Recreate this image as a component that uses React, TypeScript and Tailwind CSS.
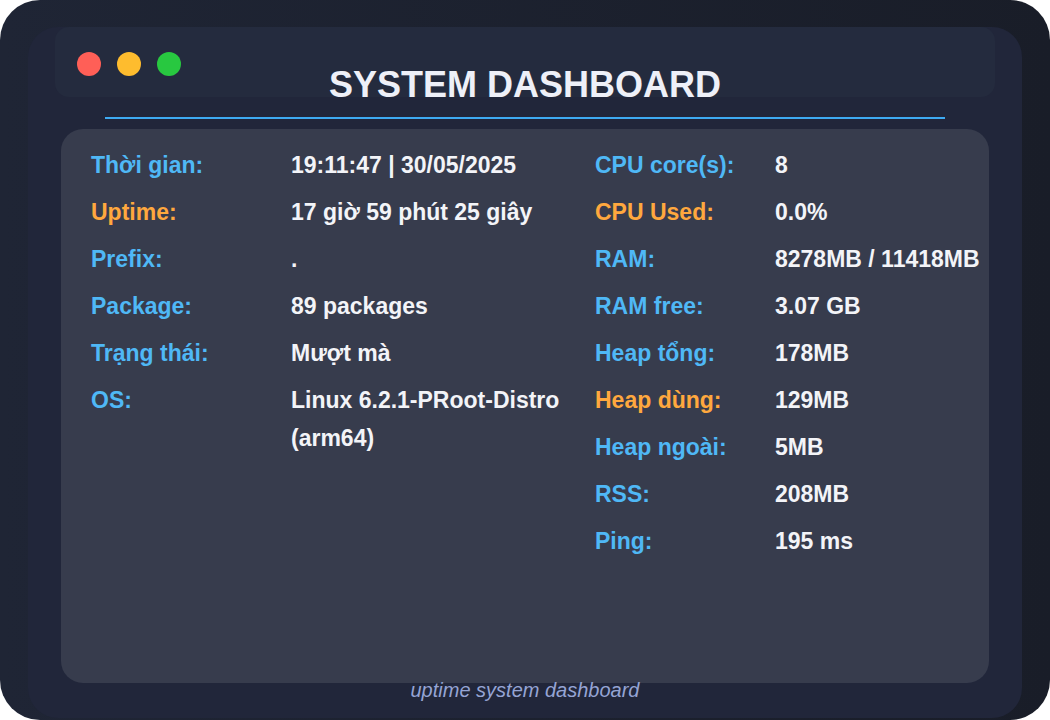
import React from "react";

type Row = { label: string; value: string; accent?: boolean };

const leftRows: Row[] = [
  { label: "Thời gian:", value: "19:11:47 | 30/05/2025" },
  { label: "Uptime:", value: "17 giờ 59 phút 25 giây", accent: true },
  { label: "Prefix:", value: "." },
  { label: "Package:", value: "89 packages" },
  { label: "Trạng thái:", value: "Mượt mà" },
  { label: "OS:", value: "Linux 6.2.1-PRoot-Distro (arm64)" },
];

const rightRows: Row[] = [
  { label: "CPU core(s):", value: "8" },
  { label: "CPU Used:", value: "0.0%", accent: true },
  { label: "RAM:", value: "8278MB / 11418MB" },
  { label: "RAM free:", value: "3.07 GB" },
  { label: "Heap tổng:", value: "178MB" },
  { label: "Heap dùng:", value: "129MB", accent: true },
  { label: "Heap ngoài:", value: "5MB" },
  { label: "RSS:", value: "208MB" },
  { label: "Ping:", value: "195 ms" },
];

function InfoRow({ row, labelWidth, valueWidth }: { row: Row; labelWidth: string; valueWidth: string }) {
  return (
    <div className="flex">
      <div className={`${labelWidth} shrink-0 ${row.accent ? "text-[#ffa83e]" : "text-[#4fb8f6]"}`}>
        {row.label}
      </div>
      <div className={`${valueWidth} text-[#f3f4f8] whitespace-normal`}>{row.value}</div>
    </div>
  );
}

export default function App() {
  return (
    <div className="w-[1050px] h-[720px] bg-white" style={{ fontFamily: "'Liberation Sans', Arial, sans-serif" }}>
      <div className="w-full h-full rounded-[40px] bg-gradient-to-r from-[#1f2535] to-[#191d28] pt-[27px] px-[28px] pb-[2px]">
        <div className="h-full rounded-[30px] bg-[#21263a] flex flex-col">
          {/* header band */}
          <div className="mx-[27px] h-[70px] shrink-0 rounded-[14px] bg-[#242b3e]">
            <div className="flex gap-[16px] pt-[25px] pl-[22px]">
              <span className="w-[24px] h-[24px] rounded-full bg-[#ff5f57]" />
              <span className="w-[24px] h-[24px] rounded-full bg-[#febc2e]" />
              <span className="w-[24px] h-[24px] rounded-full bg-[#28c840]" />
            </div>
            <h1 className="-mt-[13px] text-center text-[36px] leading-[44px] font-bold text-[#eef0f8] tracking-normal">
              SYSTEM DASHBOARD
            </h1>
          </div>

          <div className="mx-[77px] mt-[20px] h-[2px] bg-[#3eaaf2]" />

          <div className="mx-[33px] mt-[10px] h-[554px] rounded-[22px] bg-[#373c4d] pt-[17px] pl-[30px] flex text-[23px] leading-[38px] font-bold">
            <div className="w-[504px] flex flex-col gap-[9px]">
              {leftRows.map((r) => (
                <InfoRow key={r.label} row={r} labelWidth="w-[200px]" valueWidth="w-[284px]" />
              ))}
            </div>
            <div className="flex-1 flex flex-col gap-[9px]">
              {rightRows.map((r) => (
                <InfoRow key={r.label} row={r} labelWidth="w-[180px]" valueWidth="whitespace-nowrap" />
              ))}
            </div>
          </div>

          <p className="text-center italic text-[20px] leading-[14px] text-[#95a4d4]">uptime system dashboard</p>
        </div>
      </div>
    </div>
  );
}
